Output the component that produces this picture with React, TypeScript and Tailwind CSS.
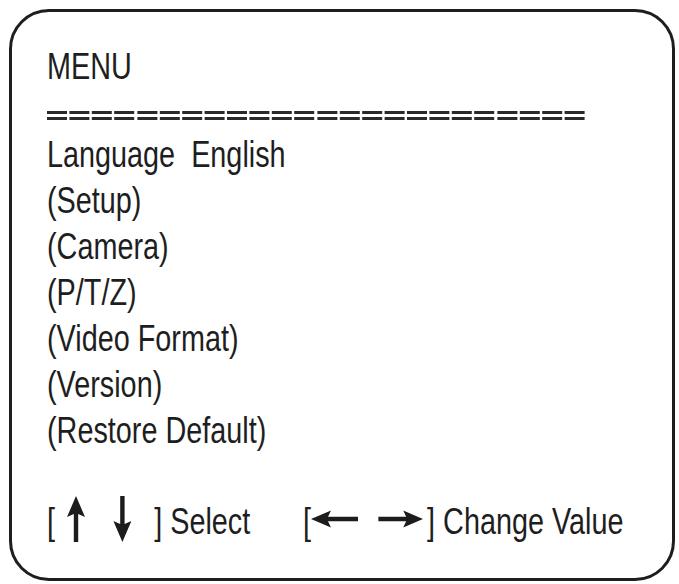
import React from 'react';

const menuItems = [
  'Language  English',
  '(Setup)',
  '(Camera)',
  '(P/T/Z)',
  '(Video Format)',
  '(Version)',
  '(Restore Default)',
];

// Content is squeezed to 80% width, so drawings get pre-stretched widths
const ArrowUp: React.FC<{ down?: boolean }> = ({ down }) => (
  <svg
    width="22.5"
    height="46"
    viewBox="0 0 18 46"
    preserveAspectRatio="none"
    className={down ? 'rotate-180 block' : 'block'}
  >
    <path d="M9 0 L18 21 L11.2 18 L11.2 46 L6.8 46 L6.8 18 L0 21 Z" fill="#1c1c1c" />
  </svg>
);

const ArrowSide: React.FC<{ left?: boolean; w: number }> = ({ left, w }) => (
  <svg
    width={w / 0.8}
    height="20"
    viewBox={`0 0 ${w} 20`}
    preserveAspectRatio="none"
    className={left ? 'rotate-180 block' : 'block'}
  >
    <path
      d={`M${w} 10 L${w - 20} 1.5 L${w - 17} 7.8 L0 7.8 L0 12.2 L${w - 17} 12.2 L${w - 20} 18.5 Z`}
      fill="#1c1c1c"
    />
  </svg>
);

export default function App() {
  return (
    <div className="w-[679px] h-[584px] bg-white pt-[9px] pl-[9px]">
      <div className="w-[666px] h-[572px] border-[3px] border-[#1e1e1e] rounded-[40px] pl-[35px] pt-[32px] text-[#1e1e1e]">
        <div
          className="w-[760px] flex flex-col scale-x-[0.8] origin-left text-[36px] leading-[46px]"
          style={{ fontFamily: '"Liberation Sans", Arial, sans-serif' }}
        >
          <div>MENU</div>

          {/* double dashed rule */}
          <div className="mt-[21px] flex gap-[3.125px]">
            {Array.from({ length: 24 }).map((_, i) => (
              <div key={i} className="w-[25px] shrink-0 flex flex-col gap-[3px]">
                <div className="h-[2.5px] bg-[#2a2a2a]" />
                <div className="h-[3px] bg-[#2a2a2a]" />
              </div>
            ))}
          </div>

          <div className="mt-[12px] flex flex-col">
            {menuItems.map((item) => (
              <div key={item} className="whitespace-pre">{item}</div>
            ))}
          </div>

          <div className="mt-[45px] flex items-start h-[46px] whitespace-pre">
            <span className="shrink-0">[</span>
            <div className="shrink-0 ml-[15px] -mt-[3px]"><ArrowUp /></div>
            <div className="shrink-0 ml-[35px] -mt-[3px]"><ArrowUp down /></div>
            <span className="shrink-0 ml-[29px]">] Select</span>
            <span className="shrink-0 ml-[66px]">[</span>
            <div className="shrink-0 mt-[10px]"><ArrowSide left w={47} /></div>
            <div className="shrink-0 ml-[25px] mt-[10px]"><ArrowSide w={45} /></div>
            <span className="shrink-0 ml-[5px]">] Change Value</span>
          </div>
        </div>
      </div>
    </div>
  );
}
